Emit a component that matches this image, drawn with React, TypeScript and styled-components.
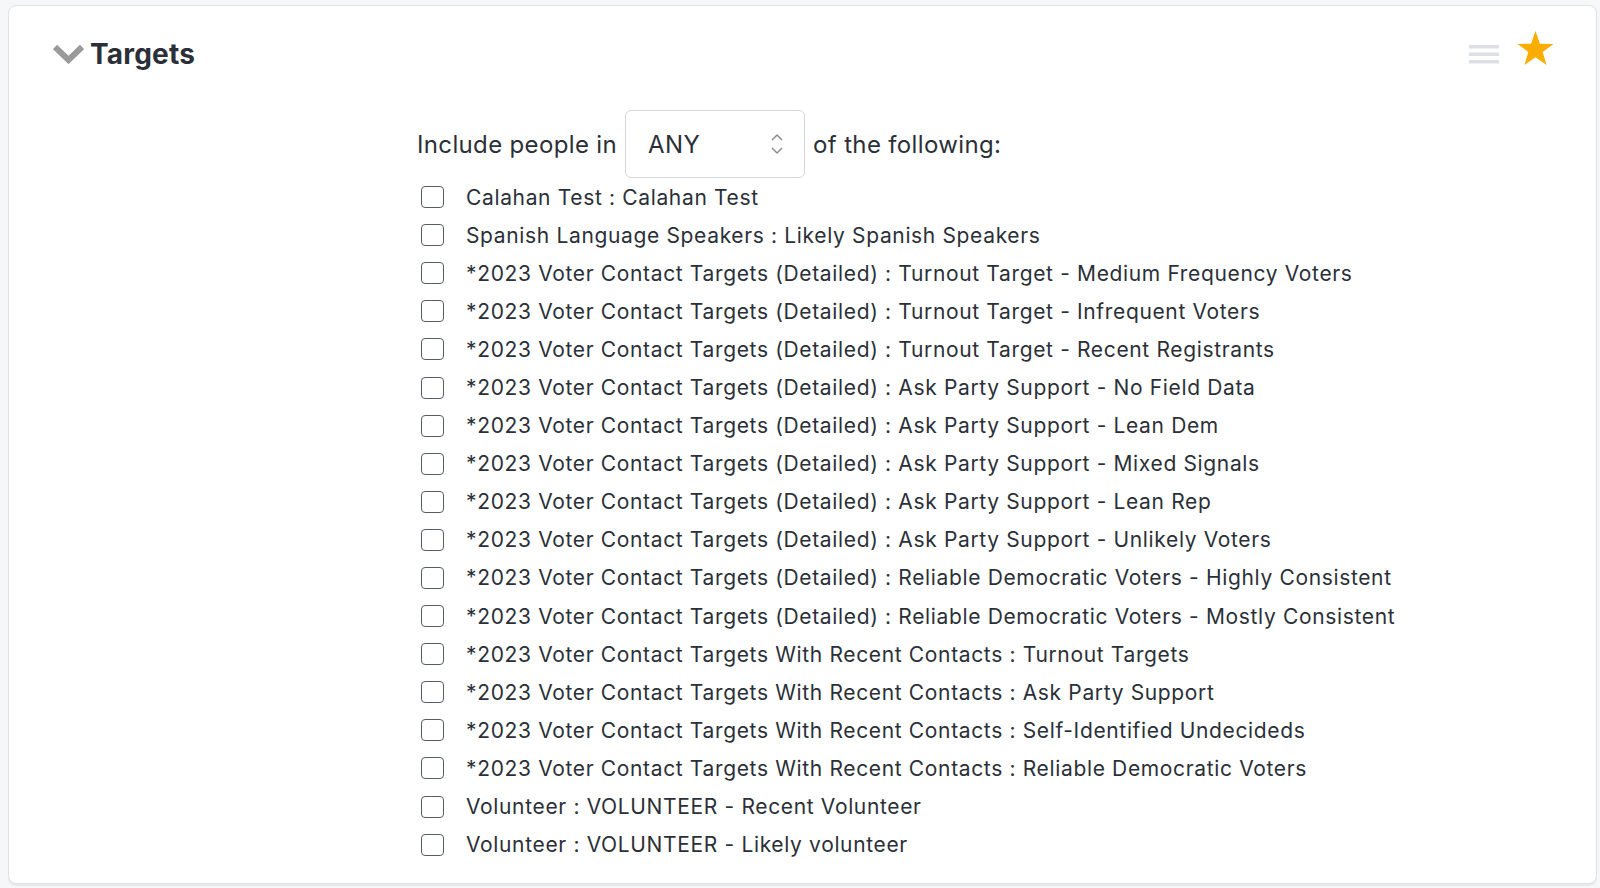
import React from 'react'
import styled, { createGlobalStyle } from 'styled-components'

const GlobalStyle = createGlobalStyle`
  html, body {
    margin: 0;
    padding: 0;
    background: #f6f7f9;
    font-family: Inter, "Noto Sans", sans-serif;
  }
`

const Page = styled.div`
  padding: 5px 3px 4px 8px;
  height: 888px;
  box-sizing: border-box;
`

const Card = styled.section`
  height: 100%;
  box-sizing: border-box;
  background: #fff;
  border: 1px solid #dfe2e6;
  border-radius: 8px;
  box-shadow: 0 2px 1px rgba(0, 0, 0, 0.06);
`

const Header = styled.header`
  display: flex;
  align-items: center;
  justify-content: space-between;
  padding: 25px 41px 0 44px;
  height: 46px;
`

const TitleGroup = styled.div`
  display: flex;
  align-items: center;
  gap: 6px;
`

const Title = styled.h2`
  margin: 0;
  font-size: 28px;
  font-weight: 700;
  color: #2b3038;
  letter-spacing: 0.2px;
`

const Tools = styled.div`
  display: flex;
  align-items: center;
  gap: 17px;
`

const StarWrap = styled.span`
  display: flex;
  margin-bottom: 11px;
`

const Body = styled.div`
  padding: 33px 0 0 408px;
`

const IncludeRow = styled.div`
  display: flex;
  align-items: center;
  gap: 8px;
  font-size: 24px;
  color: #2b3038;
  letter-spacing: 0.35px;
`

const SelectBox = styled.div`
  display: flex;
  align-items: center;
  justify-content: space-between;
  box-sizing: border-box;
  width: 180px;
  height: 68px;
  padding: 0 20px 0 22px;
  border: 1px solid #d3d6db;
  border-radius: 6px;
  font-size: 24px;
  color: #2b3038;
`

const List = styled.ul`
  list-style: none;
  margin: 0;
  padding: 0;
`

const Row = styled.li`
  display: flex;
  align-items: center;
  height: 38.1px;
  padding-left: 4px;
  gap: 22px;
`

const Box = styled.span`
  width: 23px;
  height: 22px;
  box-sizing: border-box;
  border: 1.5px solid #585d64;
  border-radius: 4px;
  flex-shrink: 0;
`

const Label = styled.span`
  font-size: 21px;
  color: #2b3038;
  letter-spacing: 0.65px;
  white-space: nowrap;
`

const Chevron = () => (
  <svg width="31" height="20" viewBox="0 0 31 20">
    <path d="M2 3 L15.5 16 L29 3" fill="none" stroke="#9a9a9a" strokeWidth="6" strokeLinejoin="miter" />
  </svg>
)

const Hamburger = () => (
  <svg width="30" height="19" viewBox="0 0 30 19">
    <rect x="0" y="0" width="30" height="3.5" fill="#dcdfe4" />
    <rect x="0" y="7.5" width="30" height="3.5" fill="#dcdfe4" />
    <rect x="0" y="15" width="30" height="3.5" fill="#dcdfe4" />
  </svg>
)

const Star = () => (
  <svg width="39" height="37" viewBox="0 0 38 36">
    <polygon
      points="19,1 23.3,13.3 36.5,13.5 26,21.4 29.8,34 19,26.5 8.2,34 12,21.4 1.5,13.5 14.7,13.3"
      fill="#f9ad00"
    />
  </svg>
)

const UpDown = () => (
  <svg width="14" height="22" viewBox="0 0 14 22">
    <path d="M2 7 L7 2 L12 7 M2 15 L7 20 L12 15" fill="none" stroke="#8a8d92" strokeWidth="1.5" />
  </svg>
)

const targets = [
  'Calahan Test : Calahan Test',
  'Spanish Language Speakers : Likely Spanish Speakers',
  '*2023 Voter Contact Targets (Detailed) : Turnout Target - Medium Frequency Voters',
  '*2023 Voter Contact Targets (Detailed) : Turnout Target - Infrequent Voters',
  '*2023 Voter Contact Targets (Detailed) : Turnout Target - Recent Registrants',
  '*2023 Voter Contact Targets (Detailed) : Ask Party Support - No Field Data',
  '*2023 Voter Contact Targets (Detailed) : Ask Party Support - Lean Dem',
  '*2023 Voter Contact Targets (Detailed) : Ask Party Support - Mixed Signals',
  '*2023 Voter Contact Targets (Detailed) : Ask Party Support - Lean Rep',
  '*2023 Voter Contact Targets (Detailed) : Ask Party Support - Unlikely Voters',
  '*2023 Voter Contact Targets (Detailed) : Reliable Democratic Voters - Highly Consistent',
  '*2023 Voter Contact Targets (Detailed) : Reliable Democratic Voters - Mostly Consistent',
  '*2023 Voter Contact Targets With Recent Contacts : Turnout Targets',
  '*2023 Voter Contact Targets With Recent Contacts : Ask Party Support',
  '*2023 Voter Contact Targets With Recent Contacts : Self-Identified Undecideds',
  '*2023 Voter Contact Targets With Recent Contacts : Reliable Democratic Voters',
  'Volunteer : VOLUNTEER - Recent Volunteer',
  'Volunteer : VOLUNTEER - Likely volunteer',
]

const App = () => {
  return (
    <Page>
      <GlobalStyle />
      <Card>
        <Header>
          <TitleGroup>
            <Chevron />
            <Title>Targets</Title>
          </TitleGroup>
          <Tools>
            <Hamburger />
            <StarWrap>
              <Star />
            </StarWrap>
          </Tools>
        </Header>
        <Body>
          <IncludeRow>
            <span>Include people in</span>
            <SelectBox>
              <span>ANY</span>
              <UpDown />
            </SelectBox>
            <span>of the following:</span>
          </IncludeRow>
          <List>
            {targets.map((t) => (
              <Row key={t}>
                <Box />
                <Label>{t}</Label>
              </Row>
            ))}
          </List>
        </Body>
      </Card>
    </Page>
  )
}

export default App
